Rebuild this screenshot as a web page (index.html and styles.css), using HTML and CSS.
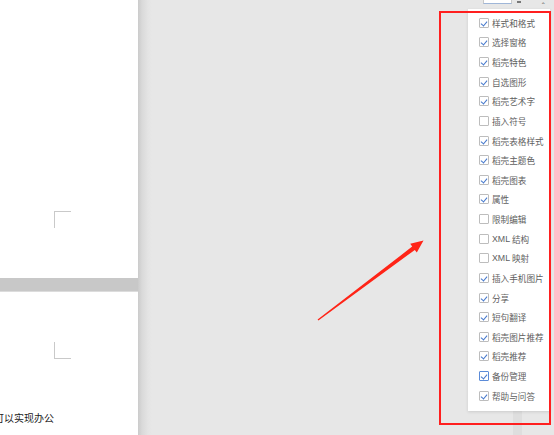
FILE: index.html
```html
<!DOCTYPE html>
<html lang="zh">
<head>
<meta charset="utf-8">
<link rel="stylesheet" href="styles.css">
</head>
<body>
<div class="app">
  <div class="doc">
    <div class="page page-top"><span class="corner corner-tl"></span></div>
    <div class="page-gap"></div>
    <div class="page page-bottom">
      <span class="corner corner-bl"></span>
      <p class="doc-text">可以实现办公</p>
    </div>
  </div>
  <div class="canvas">
    <div class="tools">
      <span class="tool-box"></span>
      <span class="tool-drop"></span>
      <span class="tool-caret">ˆ</span>
    </div>
    <div class="scroll-strip"></div>
  </div>
</div>

<ul class="menu">
  <li class="item"><span class="cb on"></span>样式和格式</li>
  <li class="item"><span class="cb on"></span>选择窗格</li>
  <li class="item"><span class="cb on"></span>稻壳特色</li>
  <li class="item"><span class="cb on"></span>自选图形</li>
  <li class="item"><span class="cb on"></span>稻壳艺术字</li>
  <li class="item"><span class="cb"></span>插入符号</li>
  <li class="item"><span class="cb on"></span>稻壳表格样式</li>
  <li class="item"><span class="cb on"></span>稻壳主题色</li>
  <li class="item"><span class="cb on"></span>稻壳图表</li>
  <li class="item"><span class="cb on"></span>属性</li>
  <li class="item"><span class="cb"></span>限制编辑</li>
  <li class="item"><span class="cb"></span><span class="lat">XML</span>&nbsp;结构</li>
  <li class="item"><span class="cb"></span><span class="lat">XML</span>&nbsp;映射</li>
  <li class="item"><span class="cb on"></span>插入手机图片</li>
  <li class="item"><span class="cb on"></span>分享</li>
  <li class="item"><span class="cb on"></span>短句翻译</li>
  <li class="item"><span class="cb on"></span>稻壳图片推荐</li>
  <li class="item"><span class="cb on"></span>稻壳推荐</li>
  <li class="item"><span class="cb on focus"></span>备份管理</li>
  <li class="item"><span class="cb on"></span>帮助与问答</li>
</ul>

<div class="highlight"></div>

<svg class="arrow" width="554" height="435" viewBox="0 0 554 435">
  <polygon fill="#ff2417" points="317.6,319.6 412.2,246.6 410.2,243.8 423.5,240.6 416.8,252.6 414.8,249.9 318.4,320.6"/>
</svg>
</body>
</html>
```

FILE: styles.css
```css
* { box-sizing: border-box; }
html, body { margin: 0; padding: 0; }
body {
  width: 554px;
  height: 435px;
  overflow: hidden;
  background: #e7e7e7;
  font-family: "Noto Sans CJK SC", "Noto Sans", sans-serif;
}
.app {
  display: flex;
  width: 554px;
  height: 435px;
}
.doc {
  width: 138px;
  flex: none;
  display: flex;
  flex-direction: column;
}
.page {
  background: #fff;
  overflow: hidden;
}
.page-top {
  height: 278px;
  padding-top: 211px;
  padding-left: 54px;
}
.page-gap {
  height: 14px;
  background: #c8c8c8;
  border-bottom: 1px solid #dcdcdc;
}
.page-bottom {
  flex: 1;
  padding-top: 50px;
  padding-left: 54px;
}
.corner {
  display: block;
  width: 17px;
  height: 17px;
}
.corner-tl {
  border-top: 1px solid #c9c9c9;
  border-left: 1px solid #c9c9c9;
}
.corner-bl {
  border-bottom: 1px solid #c9c9c9;
  border-left: 1px solid #c9c9c9;
}
.doc-text {
  margin: 52px 0 0 -60px;
  font-size: 10px;
  line-height: 14px;
  color: #222;
  white-space: nowrap;
}
.canvas {
  flex: 1;
  display: flex;
  flex-direction: column;
  background: linear-gradient(to right, #cbcbcb 0, #d9d9d9 4px, #e4e4e4 10px, #e7e7e7 14px);
  position: relative;
}
.tools {
  display: flex;
  align-items: flex-start;
  height: 12px;
  padding-left: 345px;
}
.tool-box {
  width: 29px;
  height: 4px;
  background: #fff;
  border: 1px solid #c8c8c8;
  border-top: none;
  border-bottom-color: #9fb6d8;
}
.tool-drop {
  width: 4px;
  height: 2px;
  margin-left: 5px;
  margin-top: 1px;
  background: #777;
}
.tool-caret {
  margin-left: 20px;
  margin-top: 3px;
  font-size: 9px;
  line-height: 9px;
  color: #666;
  font-family: "DejaVu Sans", sans-serif;
}
.scroll-strip {
  margin-left: 375px;
  width: 9px;
  flex: 1;
  background: #dedede;
}
.menu {
  position: absolute;
  left: 468px;
  top: 9px;
  width: 82px;
  height: 402px;
  margin: 0;
  padding: 4px 0 0 0;
  list-style: none;
  background: #fff;
  box-shadow: 0 1px 3px rgba(0,0,0,0.12);
}
.item {
  height: 19.63px;
  display: flex;
  align-items: center;
  padding-left: 11px;
  font-size: 8.6px;
  color: #606060;
  white-space: nowrap;
}
.lat {
  font-family: "Liberation Sans", sans-serif;
  font-size: 8.8px;
}
.cb {
  width: 10px;
  height: 10px;
  flex: none;
  margin-right: 3px;
  border: 1px solid #bdbdbd;
  border-radius: 1px;
  background: #fff;
  position: relative;
}
.cb.on::after {
  content: "";
  position: absolute;
  left: 2px;
  top: 1px;
  width: 3px;
  height: 5px;
  border-right: 1.3px solid #4477cc;
  border-bottom: 1.3px solid #4477cc;
  transform: rotate(40deg);
}
.cb.focus {
  border-color: #5b8bd8;
}
.highlight {
  position: absolute;
  left: 439px;
  top: 11px;
  width: 112px;
  height: 414px;
  border: 2px solid #ff1f1f;
}
.arrow {
  position: absolute;
  left: 0;
  top: 0;
}
```
